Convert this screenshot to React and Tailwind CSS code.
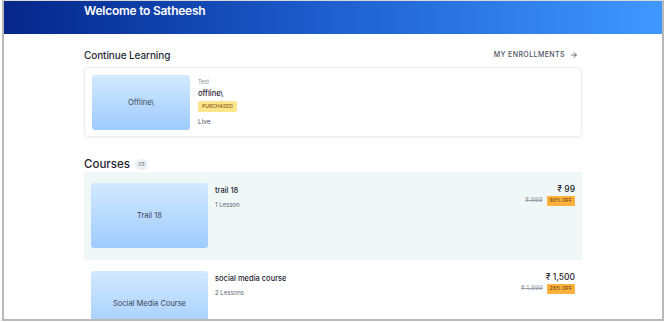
import { ArrowRight } from 'lucide-react';

const courses = [
  { thumb: 'Trail 18', title: 'trail 18', lessons: '1 Lesson', price: '₹ 99', mrp: '₹ 999', off: '90% OFF', active: true },
  { thumb: 'Social Media Course', title: 'social media course', lessons: '2 Lessons', price: '₹ 1,500', mrp: '₹ 1,999', off: '25% OFF' },
];

const Thumb = ({ label, className }) => (
  <div className={`bg-gradient-to-b from-[#d3e9ff] to-[#9ecbff] rounded-[3px] flex items-center justify-center text-[#3b4556] shrink-0 ${className}`}>
    {label}
  </div>
);

export default function App() {
  return (
    <div className="w-[670px] h-[322px] bg-white overflow-hidden" style={{ fontFamily: 'Inter, "Noto Sans", sans-serif' }}>
      <div className="ml-[2px] w-[662px] h-[321px] border-x-2 border-b-2 border-t border-x-[#b9b9b9] border-b-[#b9b9b9] border-t-[#d9d9d9] overflow-hidden flex flex-col">

        {/* ── HEADER ── */}
        <header className="h-[33px] shrink-0 bg-gradient-to-r from-[#06268a] via-[#1f5fd0] to-[#4098ff]">
          <div className="w-[498px] mx-auto pt-[1px]">
            <h1 className="text-[12px] font-semibold tracking-[-0.02em] text-white leading-[17px]">Welcome to Satheesh</h1>
          </div>
        </header>

        <main className="w-[498px] mx-auto flex flex-col">

          {/* Continue learning */}
          <div className="flex items-center justify-between mt-[14px] h-[14px]">
            <h2 className="text-[10px] font-medium tracking-[-0.01em] text-[#262b36]">Continue Learning</h2>
            <span className="flex items-center gap-[5px] text-[7px] tracking-[0.06em] text-[#4b5263] font-medium mr-[4px]">
              MY ENROLLMENTS <ArrowRight className="w-[8px] h-[8px]" strokeWidth={2.5} />
            </span>
          </div>

          <div className="mt-[5px] h-[70px] rounded-[4px] border border-[#ececec] shadow-[0_1px_3px_rgba(0,0,0,0.06)] flex p-[7px] gap-[8px]">
            <Thumb label="Offline\" className="w-[98px] h-[55px] text-[7.5px]" />
            <div className="flex flex-col pt-[3px]">
              <span className="text-[5.5px] text-[#8a8f99] leading-[8px]">Test</span>
              <span className="text-[7.5px] text-[#1f2430] font-medium leading-[10px] mt-[3px]">offline\</span>
              <span className="mt-[2px] self-start bg-[#fde58c] text-[#8a5a16] text-[5px] font-medium px-[4px] h-[11px] flex items-center rounded-[2px]">PURCHASED</span>
              <span className="text-[6.5px] text-[#4b5263] mt-[6px] leading-[9px]">Live</span>
            </div>
          </div>

          {/* Courses */}
          <div className="flex items-center gap-[5px] mt-[20px] h-[15px]">
            <h2 className="text-[11.5px] font-medium text-[#1f2430]">Courses</h2>
            <span className="w-[13px] h-[11px] rounded-full bg-[#eef0f4] text-[5px] text-[#5b6270] flex items-center justify-center">03</span>
          </div>

          <div className="flex flex-col">
            {courses.map((c) => (
              <div key={c.title} className={`flex pl-[7px] pr-[7px] pt-[11px] pb-[12px] gap-[7px] ${c.active ? 'bg-[#eff8f6]' : 'bg-white'}`}>
                <Thumb label={c.thumb} className="w-[117px] h-[65px] text-[7.5px]" />
                <div className="flex flex-col pt-[3px] flex-1">
                  <span className="text-[7.5px] font-medium text-[#1f2430] leading-[10px]">{c.title}</span>
                  <span className="text-[6px] text-[#5b6270] mt-[5px] leading-[8px]">{c.lessons}</span>
                </div>
                <div className="flex flex-col items-end pt-[1px]">
                  <span className="text-[8.5px] font-medium text-[#1f2430] leading-[11px]">{c.price}</span>
                  <div className="flex items-center gap-[4px] mt-[1px]">
                    <span className="text-[6.5px] text-[#9aa0ab] line-through">{c.mrp}</span>
                    <span className="bg-[#fbb13c] text-[#6b3f08] text-[5px] font-medium px-[3px] h-[10px] flex items-center rounded-[1px]">{c.off}</span>
                  </div>
                </div>
              </div>
            ))}
          </div>
        </main>
      </div>
    </div>
  );
}
